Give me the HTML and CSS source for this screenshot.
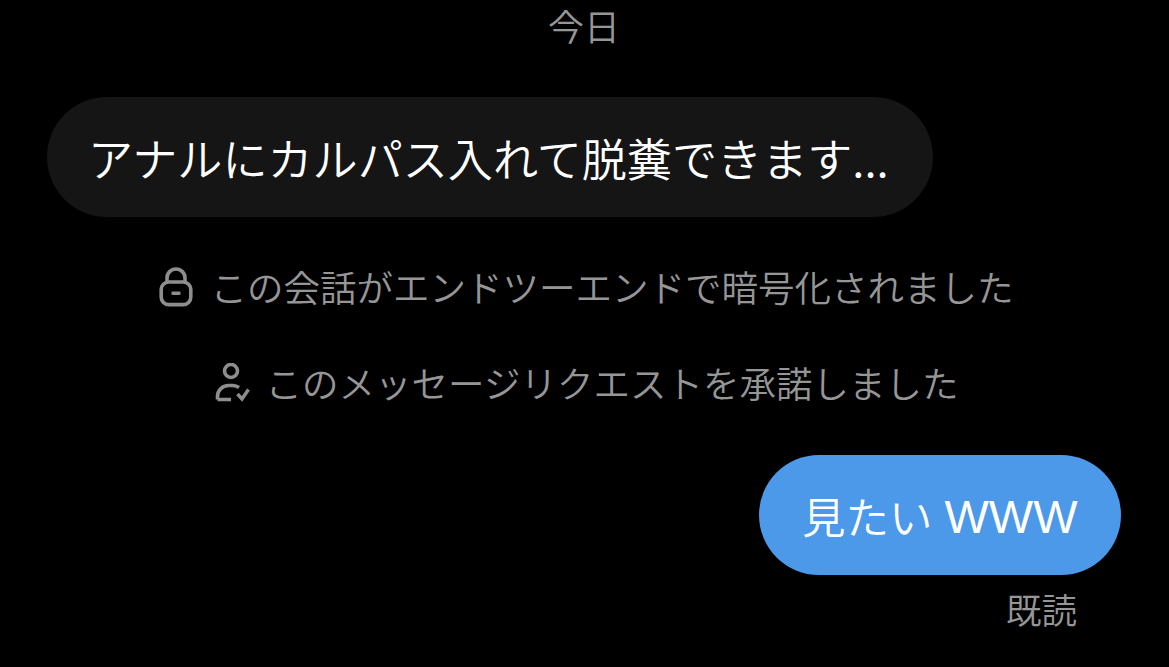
FILE: index.html
```html
<!DOCTYPE html>
<html lang="ja">
<head>
<meta charset="utf-8">
<title>メッセージ</title>
<link rel="stylesheet" href="styles.css">
</head>
<body>
<main class="thread">
  <div class="date">今日</div>
  <div class="bubble incoming">アナルにカルパス入れて脱糞できます...</div>
  <div class="notice notice-lock">
    <svg class="icon" viewBox="0 0 36 40" width="36" height="40" aria-hidden="true">
      <path d="M9 16V11a9 9 0 0 1 18 0v5" fill="none" stroke="#8e8e8e" stroke-width="3.6"/>
      <rect x="3.2" y="15" width="29.6" height="22.6" rx="7.5" fill="none" stroke="#8e8e8e" stroke-width="3.6"/>
      <rect x="13.5" y="24.6" width="9" height="3.4" rx="1" fill="#8e8e8e"/>
    </svg>
    <span>この会話がエンドツーエンドで暗号化されました</span>
  </div>
  <div class="notice notice-request">
    <svg class="icon" viewBox="0 0 36 40" width="36" height="40" aria-hidden="true">
      <circle cx="17" cy="8" r="6.500" fill="none" stroke="#8e8e8e" stroke-width="3.600"/>
      <path d="M3.500 36.500v-3a11 11 0 0 1 11-11h4.500a11 11 0 0 1 6 2M3.500 36.500h13.500" fill="none" stroke="#8e8e8e" stroke-width="3.600"/>
      <path d="M23.500 31l4.500 5 6.500-9.500" fill="none" stroke="#8e8e8e" stroke-width="3.400"/>
    </svg>
    <span>このメッセージリクエストを承諾しました</span>
  </div>
  <div class="bubble outgoing">見たい<span class="latin">WWW</span></div>
  <div class="receipt">既読</div>
</main>
</body>
</html>
```

FILE: styles.css
```css
html, body {
  margin: 0;
  height: 100%;
  background: #000;
  overflow: hidden;
}

.thread {
  display: flex;
  flex-direction: column;
  height: 667px;
  padding: 0 48px 0 47px;
  box-sizing: border-box;
  font-family: "Noto Sans CJK JP", "Noto Sans", sans-serif;
  font-weight: 350;
  color: #969696;
}

.date {
  align-self: center;
  font-size: 36px;
  line-height: 50px;
}

.bubble {
  height: 120px;
  border-radius: 60px / 50%;
  display: flex;
  align-items: center;
  color: #fff;
  white-space: nowrap;
  box-sizing: border-box;
}

.incoming {
  align-self: flex-start;
  width: 886px;
  margin-top: 47px;
  padding-left: 41px;
  background: #151515;
  font-size: 45.100px;
}

.notice {
  display: flex;
  align-self: center;
  align-items: center;
  font-size: 36.500px;
  line-height: 50px;
  white-space: nowrap;
}

.icon {
  flex: none;
}

.notice-lock {
  margin-top: 45px;
  padding-left: 3px;
  gap: 17px;
}

.notice-request {
  margin-top: 46px;
  padding-left: 4px;
  gap: 16px;
}

.outgoing {
  align-self: flex-end;
  width: 362px;
  margin-top: 47px;
  padding-left: 43px;
  background: #4c98e9;
  font-size: 43.500px;
}

.latin {
  margin-left: 12px;
  padding-top: 2px;
  font-family: "Liberation Sans", sans-serif;
  font-weight: 400;
  font-size: 47px;
}

.receipt {
  align-self: flex-end;
  margin: 9px -4px 0 0;
  padding-right: 48px;
  font-size: 35.500px;
  line-height: 50px;
}
```
